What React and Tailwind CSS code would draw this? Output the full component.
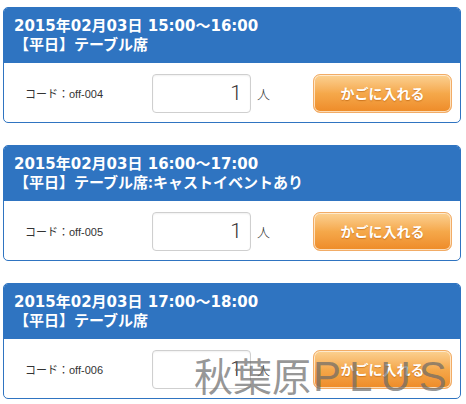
import React from "react";

const items = [
  { time: "2015年02月03日 15:00〜16:00", title: "【平日】テーブル席", code: "off-004" },
  { time: "2015年02月03日 16:00〜17:00", title: "【平日】テーブル席:キャストイベントあり", code: "off-005" },
  { time: "2015年02月03日 17:00〜18:00", title: "【平日】テーブル席", code: "off-006" },
];

function Card({ time, title, code }) {
  return (
    <div className="border border-[#2f74c1] rounded-[5px] overflow-hidden bg-white">
      <div className="bg-[#2f74c1] pl-[10px] pt-[9px] pb-[10px] text-white font-bold text-[15px] leading-[18px] [font-family:'DejaVu_Sans','Noto_Sans_CJK_JP',sans-serif]">
        <div className="whitespace-nowrap">{time}</div>
        <div className="whitespace-nowrap [font-family:'Noto_Sans_CJK_JP',sans-serif]">{title}</div>
      </div>
      <div className="h-[59px] flex items-center pl-[21px] pr-[8px] pt-[2px] text-[#333333]">
        <div className="w-[127px] mt-[2px] text-[11px] [font-family:'Liberation_Sans','Noto_Sans_CJK_JP',sans-serif]">
          コード：{code}
        </div>
        <div className="w-[99px] h-[39px] border border-[#cfcfcf] rounded-[4px] bg-white flex items-center justify-end pr-[8px] text-[21px] font-light text-[#333333] [font-family:'Roboto',sans-serif] shadow-[inset_0_1px_2px_rgba(0,0,0,0.06)]">
          1
        </div>
        <div className="ml-[6px] text-[13px] font-light [font-family:'Noto_Sans_CJK_JP',sans-serif]">人</div>
        <button className="ml-auto w-[139px] h-[39px] rounded-[7px] border border-[#f2ac66] bg-gradient-to-b from-[#fbd191] via-[#f5a84a] to-[#ee8b27] shadow-[inset_0_0_0_1px_rgba(255,240,220,0.8)] text-white font-bold text-[14px] [font-family:'Noto_Sans_CJK_JP',sans-serif] [text-shadow:0_1px_1px_rgba(170,80,0,0.5)] flex items-center justify-center">
          かごに入れる
        </button>
      </div>
    </div>
  );
}

export default function App() {
  return (
    <div className="relative w-[466px] h-[404px] overflow-hidden bg-white pt-[7px] pl-[3px] pr-[5px]">
      <div className="flex flex-col gap-[22px]">
        {items.map((it) => (
          <Card key={it.code} {...it} />
        ))}
      </div>
      <div className="absolute left-[194px] top-[355px] flex items-baseline leading-none text-[rgba(105,105,105,0.7)] pointer-events-none whitespace-nowrap">
        <span className="text-[39px] [font-family:'Noto_Sans_CJK_JP',sans-serif]">秋葉原</span>
        <span className="ml-[2px] text-[42px] tracking-[8px] [font-family:'Liberation_Sans',sans-serif]">PLUS</span>
      </div>
    </div>
  );
}
